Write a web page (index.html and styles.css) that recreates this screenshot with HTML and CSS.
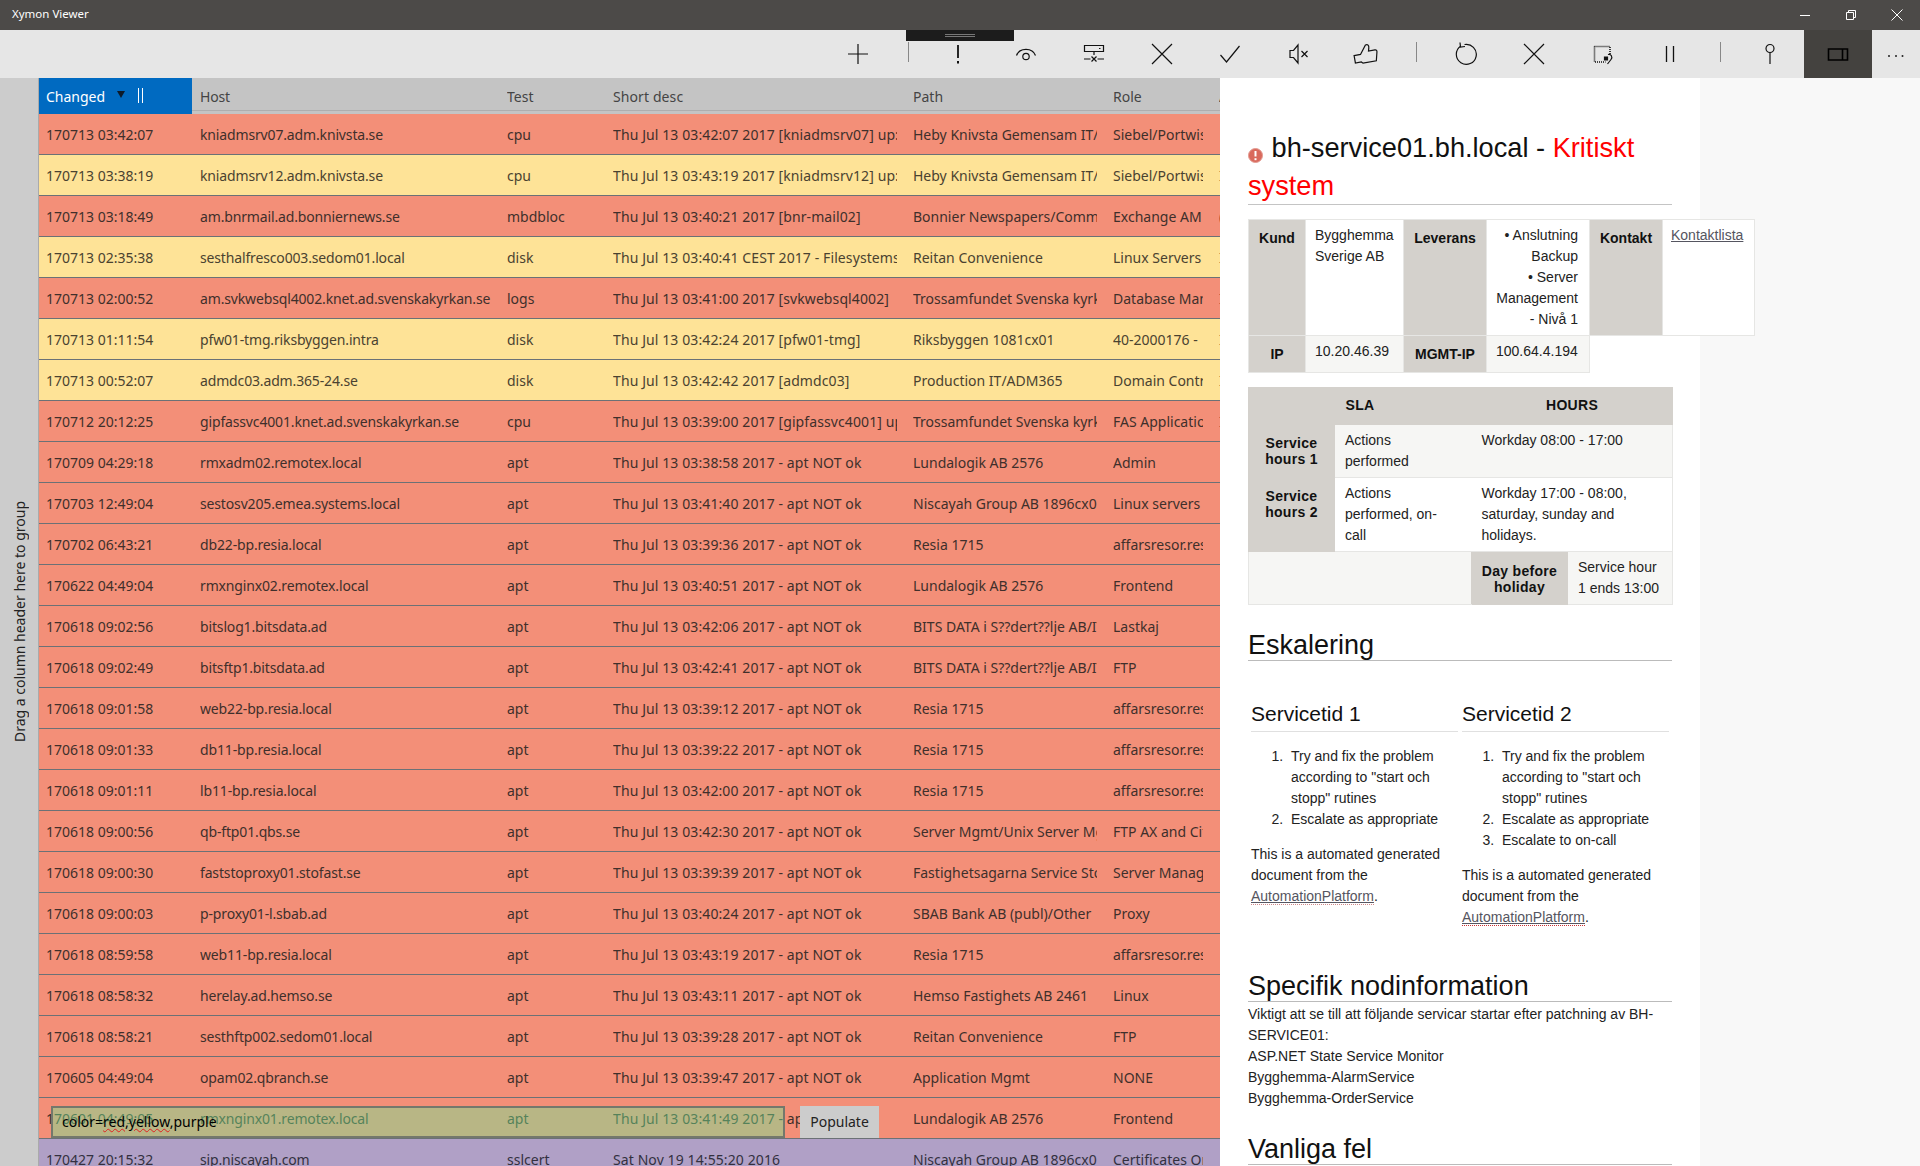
FILE: index.html
```html
<!DOCTYPE html>
<html lang="en">
<head>
  <meta charset="UTF-8">
  <title>Xymon Viewer</title>
  <link rel="stylesheet" href="styles.css">
</head>
<body>
  <header class="titlebar">
    <span class="app-name">Xymon Viewer</span>
    <div class="win-controls">
      <button class="win-btn"><svg width="12" height="12" viewBox="0 0 12 12"><path d="M1 6.5h10" stroke="#fff"/></svg></button>
      <button class="win-btn"><svg width="12" height="12" viewBox="0 0 12 12" fill="none" stroke="#fff"><path d="M1.5 3.5h7v7h-7z"/><path d="M3.5 3.5v-2h7v7h-2"/></svg></button>
      <button class="win-btn"><svg width="12" height="12" viewBox="0 0 12 12"><path d="M.5.5l11 11M11.5.5l-11 11" stroke="#fff"/></svg></button>
    </div>
  </header>

  <div class="toolbar">
    <div class="grip"><span></span></div>
    <button class="tool"><svg width="24" height="24" viewBox="0 0 24 24" class="ico"><path d="M2 12h20M12 2v20"/></svg></button>
    <span class="tool-sep"></span>
    <button class="tool"><svg width="24" height="24" viewBox="0 0 24 24" class="ico"><path d="M12 3v13" stroke-width="1.8"/><path d="M12 19v2.5" stroke-width="2"/></svg></button>
    <button class="tool"><svg width="24" height="24" viewBox="0 0 24 24" class="ico"><path d="M2.5 13.5a10 9 0 0 1 19 0"/><circle cx="12" cy="14.5" r="3.2"/></svg></button>
    <button class="tool"><svg width="24" height="24" viewBox="0 0 24 24" class="ico"><path d="M2.5 3.5h19v6h-19z"/><path d="M17 6.5h1.5M12 9.5v3.5M2 17h6.5M15.5 17H22M9.5 14.5l5 5M14.5 14.5l-5 5"/></svg></button>
    <button class="tool"><svg width="24" height="24" viewBox="0 0 24 24" class="ico"><path d="M2 2l20 20M22 2L2 22"/></svg></button>
    <button class="tool"><svg width="24" height="24" viewBox="0 0 24 24" class="ico"><path d="M2.5 13l6 7L21.500 4"/></svg></button>
    <button class="tool"><svg width="24" height="24" viewBox="0 0 24 24" class="ico"><path d="M4 8.500h3.500L12 3v18l-4.500-5.500H4z"/><path d="M15.500 9l6 6M21.500 9l-6 6"/></svg></button>
    <button class="tool"><svg width="26" height="24" viewBox="0 0 26 24" class="ico"><g transform="rotate(-10 13 12)"><path d="M1 11.500h6.500L14 3c2.500-.5 3.500 1 2.800 3.500L16 9.500h6.500c1.500 0 2 1.200 1.600 2.500L22 20.500H8.500L7 19H1z"/></g></svg></button>
    <span class="tool-sep"></span>
    <button class="tool"><svg width="24" height="24" viewBox="0 0 24 24" class="ico"><path d="M6.500 4.200a10 10 0 1 0 4-1.700"/><path d="M6 0.500l.5 4.500 4.500-.5"/></svg></button>
    <button class="tool"><svg width="24" height="24" viewBox="0 0 24 24" class="ico"><path d="M2 2l20 20M22 2L2 22"/></svg></button>
    <button class="tool"><svg width="24" height="24" viewBox="0 0 24 24" class="ico"><path d="M4.500 4.500h15.500v8M4.500 4.500v15.500h11" stroke-dasharray="1 1" stroke-width="1.600"/><path d="M14.500 15h3v3h-3z" fill="#111"/><path d="M18 12.500c3-1 5 2.500 3 5l-3.500 4.500"/></svg></button>
    <button class="tool"><svg width="24" height="24" viewBox="0 0 24 24" class="ico"><path d="M8.500 4v16M15.500 4v16" stroke-width="1.300"/></svg></button>
    <span class="tool-sep"></span>
    <button class="tool"><svg width="24" height="24" viewBox="0 0 24 24" class="ico"><circle cx="12" cy="6.500" r="4"/><path d="M12 10.500V22"/></svg></button>
    <button class="tool active"><svg width="24" height="24" viewBox="0 0 24 24" class="ico ico-bold"><path d="M2.500 7h19v11h-19zM16.500 7v11"/></svg></button>
    <button class="tool more"><svg width="20" height="6" viewBox="0 0 20 6"><circle cx="3" cy="3" r="1" fill="#222"/><circle cx="10" cy="3" r="1" fill="#222"/><circle cx="16.500" cy="3" r="1" fill="#222"/></svg></button>
  </div>

  <div class="main">
    <aside class="group-bar"><span>Drag a column header here to group</span></aside>

    <section class="grid">
      <div class="row head">
        <span class="sorted">Changed <svg class="sort-arrow" width="8" height="7" viewBox="0 0 8 7"><path d="M0 0h8L4 7z" fill="#0d1b2a"/></svg><i class="resize"></i></span>
        <span>Host</span><span>Test</span><span>Short desc</span><span>Path</span><span>Role</span><span>A</span>
      </div>
      <div class="row red"><span>170713 03:42:07</span><span>kniadmsrv07.adm.knivsta.se</span><span>cpu</span><span>Thu Jul 13 03:42:07 2017 [kniadmsrv07] up: 10:00</span><span>Heby Knivsta Gemensam IT/Drift</span><span>Siebel/Portwise</span><span></span></div>
      <div class="row yellow"><span>170713 03:38:19</span><span>kniadmsrv12.adm.knivsta.se</span><span>cpu</span><span>Thu Jul 13 03:43:19 2017 [kniadmsrv12] up: 10:00</span><span>Heby Knivsta Gemensam IT/Drift</span><span>Siebel/Portwise</span><span>I</span></div>
      <div class="row red"><span>170713 03:18:49</span><span>am.bnrmail.ad.bonniernews.se</span><span>mbdbloc</span><span>Thu Jul 13 03:40:21 2017 [bnr-mail02]</span><span>Bonnier Newspapers/Communication</span><span>Exchange AM</span><span>(</span></div>
      <div class="row yellow"><span>170713 02:35:38</span><span>sesthalfresco003.sedom01.local</span><span>disk</span><span>Thu Jul 13 03:40:41 CEST 2017 - Filesystems</span><span>Reitan Convenience</span><span>Linux Servers</span><span>I</span></div>
      <div class="row red"><span>170713 02:00:52</span><span>am.svkwebsql4002.knet.ad.svenskakyrkan.se</span><span>logs</span><span>Thu Jul 13 03:41:00 2017 [svkwebsql4002]</span><span>Trossamfundet Svenska kyrkan</span><span>Database Management</span><span>I</span></div>
      <div class="row yellow"><span>170713 01:11:54</span><span>pfw01-tmg.riksbyggen.intra</span><span>disk</span><span>Thu Jul 13 03:42:24 2017 [pfw01-tmg]</span><span>Riksbyggen 1081cx01</span><span>40-2000176 - </span><span>I</span></div>
      <div class="row yellow"><span>170713 00:52:07</span><span>admdc03.adm.365-24.se</span><span>disk</span><span>Thu Jul 13 03:42:42 2017 [admdc03]</span><span>Production IT/ADM365</span><span>Domain Controller</span><span>I</span></div>
      <div class="row red"><span>170712 20:12:25</span><span>gipfassvc4001.knet.ad.svenskakyrkan.se</span><span>cpu</span><span>Thu Jul 13 03:39:00 2017 [gipfassvc4001] up: 10:00</span><span>Trossamfundet Svenska kyrkan</span><span>FAS Application</span><span>I</span></div>
      <div class="row red"><span>170709 04:29:18</span><span>rmxadm02.remotex.local</span><span>apt</span><span>Thu Jul 13 03:38:58 2017 - apt NOT ok</span><span>Lundalogik AB 2576</span><span>Admin</span><span></span></div>
      <div class="row red"><span>170703 12:49:04</span><span>sestosv205.emea.systems.local</span><span>apt</span><span>Thu Jul 13 03:41:40 2017 - apt NOT ok</span><span>Niscayah Group AB 1896cx01</span><span>Linux servers</span><span></span></div>
      <div class="row red"><span>170702 06:43:21</span><span>db22-bp.resia.local</span><span>apt</span><span>Thu Jul 13 03:39:36 2017 - apt NOT ok</span><span>Resia 1715</span><span>affarsresor.resia.se</span><span></span></div>
      <div class="row red"><span>170622 04:49:04</span><span>rmxnginx02.remotex.local</span><span>apt</span><span>Thu Jul 13 03:40:51 2017 - apt NOT ok</span><span>Lundalogik AB 2576</span><span>Frontend</span><span></span></div>
      <div class="row red"><span>170618 09:02:56</span><span>bitslog1.bitsdata.ad</span><span>apt</span><span>Thu Jul 13 03:42:06 2017 - apt NOT ok</span><span>BITS DATA i S??dert??lje AB/IT</span><span>Lastkaj</span><span></span></div>
      <div class="row red"><span>170618 09:02:49</span><span>bitsftp1.bitsdata.ad</span><span>apt</span><span>Thu Jul 13 03:42:41 2017 - apt NOT ok</span><span>BITS DATA i S??dert??lje AB/IT</span><span>FTP</span><span></span></div>
      <div class="row red"><span>170618 09:01:58</span><span>web22-bp.resia.local</span><span>apt</span><span>Thu Jul 13 03:39:12 2017 - apt NOT ok</span><span>Resia 1715</span><span>affarsresor.resia.se</span><span></span></div>
      <div class="row red"><span>170618 09:01:33</span><span>db11-bp.resia.local</span><span>apt</span><span>Thu Jul 13 03:39:22 2017 - apt NOT ok</span><span>Resia 1715</span><span>affarsresor.resia.se</span><span></span></div>
      <div class="row red"><span>170618 09:01:11</span><span>lb11-bp.resia.local</span><span>apt</span><span>Thu Jul 13 03:42:00 2017 - apt NOT ok</span><span>Resia 1715</span><span>affarsresor.resia.se</span><span></span></div>
      <div class="row red"><span>170618 09:00:56</span><span>qb-ftp01.qbs.se</span><span>apt</span><span>Thu Jul 13 03:42:30 2017 - apt NOT ok</span><span>Server Mgmt/Unix Server Mgmt</span><span>FTP AX and Citrix</span><span></span></div>
      <div class="row red"><span>170618 09:00:30</span><span>faststoproxy01.stofast.se</span><span>apt</span><span>Thu Jul 13 03:39:39 2017 - apt NOT ok</span><span>Fastighetsagarna Service Stockholm</span><span>Server Management</span><span></span></div>
      <div class="row red"><span>170618 09:00:03</span><span>p-proxy01-l.sbab.ad</span><span>apt</span><span>Thu Jul 13 03:40:24 2017 - apt NOT ok</span><span>SBAB Bank AB (publ)/Other</span><span>Proxy</span><span></span></div>
      <div class="row red"><span>170618 08:59:58</span><span>web11-bp.resia.local</span><span>apt</span><span>Thu Jul 13 03:43:19 2017 - apt NOT ok</span><span>Resia 1715</span><span>affarsresor.resia.se</span><span></span></div>
      <div class="row red"><span>170618 08:58:32</span><span>herelay.ad.hemso.se</span><span>apt</span><span>Thu Jul 13 03:43:11 2017 - apt NOT ok</span><span>Hemso Fastighets AB 2461</span><span>Linux</span><span></span></div>
      <div class="row red"><span>170618 08:58:21</span><span>sesthftp002.sedom01.local</span><span>apt</span><span>Thu Jul 13 03:39:28 2017 - apt NOT ok</span><span>Reitan Convenience</span><span>FTP</span><span></span></div>
      <div class="row red"><span>170605 04:49:04</span><span>opam02.qbranch.se</span><span>apt</span><span>Thu Jul 13 03:39:47 2017 - apt NOT ok</span><span>Application Mgmt</span><span>NONE</span><span></span></div>
      <div class="row red"><span>170601 04:49:05</span><span>rmxnginx01.remotex.local</span><span>apt</span><span>Thu Jul 13 03:41:49 2017 - apt NOT ok</span><span>Lundalogik AB 2576</span><span>Frontend</span><span></span></div>
      <div class="row purple"><span>170427 20:15:32</span><span>sip.niscayah.com</span><span>sslcert</span><span>Sat Nov 19 14:55:20 2016</span><span>Niscayah Group AB 1896cx01</span><span>Certificates Only</span><span></span></div>

      <div class="filter-box">color=<span class="misspelled">red,yellow</span>,purple</div>
      <button class="populate">Populate</button>
    </section>

    <article class="doc">
      <h1 class="doc-title">
        <svg class="alert-icon" width="15" height="15" viewBox="0 0 15 15"><circle cx="7.500" cy="7.500" r="7" fill="#d9695c" stroke="#e39a90"/><path d="M7.500 3v5.500" stroke="#fff" stroke-width="2"/><path d="M7.500 10.200v2" stroke="#fff" stroke-width="2"/></svg>
        bh-service01.bh.local - <span class="critical">Kritiskt system</span>
      </h1>

      <table class="info-table">
        <colgroup><col class="c-kund"><col class="c-kund-val"><col class="c-lev"><col class="c-lev-val"><col class="c-kon"><col class="c-kon-val"></colgroup>
        <tr>
          <th>Kund</th>
          <td class="plain">Bygghemma Sverige AB</td>
          <th>Leverans</th>
          <td class="plain right">• Anslutning Backup<br>• Server Management<br>- Nivå 1</td>
          <th>Kontakt</th>
          <td class="plain"><a href="#" class="doc-link">Kontaktlista</a></td>
        </tr>
        <tr>
          <th>IP</th>
          <td>10.20.46.39</td>
          <th>MGMT-IP</th>
          <td>100.64.4.194</td>
        </tr>
      </table>

      <table class="sla-table">
        <colgroup><col class="s1"><col class="s2"><col class="s3"><col class="s4"></colgroup>
        <tr>
          <th colspan="2" class="sla-head">SLA</th>
          <th colspan="2" class="sla-head">HOURS</th>
        </tr>
        <tr class="alt">
          <th class="tight">Service hours 1</th>
          <td>Actions performed</td>
          <td colspan="2">Workday 08:00 - 17:00</td>
        </tr>
        <tr>
          <th class="tight">Service hours 2</th>
          <td>Actions performed, on-call</td>
          <td colspan="2">Workday 17:00 - 08:00, saturday, sunday and holidays.</td>
        </tr>
        <tr class="alt">
          <td colspan="2"></td>
          <th class="tight mid">Day before holiday</th>
          <td>Service hour 1 ends 13:00</td>
        </tr>
      </table>

      <h2 class="section first">Eskalering</h2>
      <div class="service-cols">
        <div class="service-col">
          <h3>Servicetid 1</h3>
          <ol>
            <li>Try and fix the problem according to "start och stopp" rutines</li>
            <li>Escalate as appropriate</li>
          </ol>
          <p>This is a automated generated document from the <a href="#" class="doc-link dotted">AutomationPlatform</a>.</p>
        </div>
        <div class="service-col">
          <h3>Servicetid 2</h3>
          <ol>
            <li>Try and fix the problem according to "start och stopp" rutines</li>
            <li>Escalate as appropriate</li>
            <li>Escalate to on-call</li>
          </ol>
          <p>This is a automated generated document from the <a href="#" class="doc-link dotted red-dots">AutomationPlatform</a>.</p>
        </div>
      </div>

      <h2 class="section nodinfo">Specifik nodinformation</h2>
      <p class="node-text">Viktigt att se till att följande servicar startar efter patchning av BH-SERVICE01:<br>ASP.NET State Service Monitor<br>Bygghemma-AlarmService<br>Bygghemma-OrderService</p>

      <h2 class="section errors">Vanliga fel</h2>
    </article>
  </div>
</body>
</html>
```

FILE: styles.css
```css
* { box-sizing: border-box; }
html, body { height: 100%; }
body { margin: 0; height: 1166px; overflow: hidden; display: flex; flex-direction: column; font-family: "Noto Sans", "Open Sans", sans-serif; background: #f8f8f8; }
button { font: inherit; border: none; background: none; padding: 0; }

/* title bar */
.titlebar { height: 30px; flex: none; background: #4c4a48; color: #fff; display: flex; align-items: center; justify-content: space-between; }
.app-name { font-size: 11.5px; padding: 0 0 3px 12px; }
.win-controls { display: flex; }
.win-btn { width: 46px; height: 30px; display: flex; align-items: center; justify-content: center; }

/* command bar */
.toolbar { height: 48px; flex: none; background: #e6e6e6; display: flex; justify-content: flex-end; position: relative; }
.tool { width: 68px; height: 48px; display: flex; align-items: center; justify-content: center; }
.tool.active { background: #44423f; }
.tool.more { width: 48px; padding-top: 4px; }
.tool-sep { width: 32px; display: flex; justify-content: center; padding: 12px 0 16px; }
.tool-sep::before { content: ""; width: 1px; background: #888; }
.ico { fill: none; stroke: #111; stroke-width: 1.2; }
.ico-bold { stroke: #000; stroke-width: 1.6; }
.grip { position: absolute; left: 906px; top: 0; width: 108px; height: 11px; background: #1c1c1c; display: flex; justify-content: center; padding-top: 4px; }
.grip span { width: 30px; height: 3px; border-top: 1px solid #777; border-bottom: 1px solid #777; }

/* main area */
.main { flex: 1; display: flex; min-height: 0; overflow: hidden; }
.group-bar { width: 39px; flex: none; background: #ccc; border-right: 1px solid #aaa; display: flex; align-items: center; justify-content: center; }
.group-bar span { writing-mode: vertical-rl; transform: rotate(180deg); font-size: 14px; color: #222; white-space: nowrap; }

/* data grid */
.grid { width: 1181px; flex: none; position: relative; overflow: hidden; font-size: 14px; }
.row { display: grid; grid-template-columns: 153px 307px 106px 300px 200px 106px 9px; height: 41px; align-items: center; border-bottom: 1px solid #6b7176; color: #402f2b; }
.row > span { margin: 0 8px; min-width: 0; white-space: nowrap; overflow: hidden; }
.row > span:first-child { margin-left: 7px; }
.row > span:nth-child(2) { letter-spacing: -0.15px; }
.row > span:nth-child(4) { letter-spacing: 0.1px; }
.row > span:last-child { margin-right: 0; }
.red { background: #f38f78; }
.yellow { background: #fee397; color: #4a4230; }
.purple { background: #b0a0c6; color: #33303f; }
.head { height: 36px; background: #c4c4c4; border-bottom: none; color: #444; box-shadow: inset 0 -3px 0 #c4c4c4, inset 0 -4px 0 #aeaeae; align-items: start; }
.head > span { line-height: 38px; height: 36px; }
.row > span.sorted { background: #006ac1; color: #fff; margin: 0; padding-left: 7px; position: relative; }
.sort-arrow { position: absolute; left: 78px; top: 13px; }
.resize { position: absolute; left: 99px; top: 10px; width: 5px; height: 15px; border-left: 1px solid #fff; border-right: 1px solid #fff; }

/* overlays on the grid */
.filter-box { position: absolute; left: 12px; top: 1028px; width: 734px; height: 32px; background: rgba(113, 231, 149, 0.45); border: 2px solid #74786c; color: #000; font-size: 14px; line-height: 28px; padding-left: 9px; }
.misspelled { text-decoration: underline wavy #e02020; text-decoration-thickness: 1px; }
.populate { position: absolute; left: 761px; top: 1028px; width: 79px; height: 32px; background: #ccc; color: #222; padding-bottom: 1px; }

/* wiki page on the right */
.doc { width: 480px; flex: none; background: #fff; padding: 51px 28px 0; font-family: "Liberation Sans", Arial, sans-serif; font-size: 14px; line-height: 21px; color: #222; }
.doc-title { margin: 0 0 14px; height: 76px; font-size: 27.2px; line-height: 38px; font-weight: normal; color: #111; border-bottom: 1px solid #c4c4c4; }
.alert-icon { vertical-align: -6px; margin-right: 1px; }
.critical { color: #f00; }
.doc-link { color: #555560; }
.dotted { text-decoration: underline; border-bottom: 1px dotted #d08a8a; }
.red-dots { border-bottom-color: #c33; }

table { border-collapse: collapse; table-layout: fixed; }
th { background: #d4d1cc; font-weight: bold; color: #111; }
th, td { border: 1px solid #e6e6e4; }
.info-table { width: 506px; margin-bottom: 14px; }
.info-table th { vertical-align: top; padding: 8px 4px 7px; text-align: center; }
.info-table td { vertical-align: top; padding: 5px 10px 5px 9px; background: #f6f6f4; }
.info-table td.plain { background: #fff; }
.info-table td.right { text-align: right; padding-right: 11px; }
.info-table td.plain:last-child { padding-left: 8px; }
.c-kund { width: 57px; }
.c-kund-val { width: 98px; }
.c-lev { width: 83px; }
.c-lev-val { width: 103px; }
.c-kon { width: 73px; }
.c-kon-val { width: 92px; }

.sla-table { width: 424px; border: 1px solid #e6e6e4; }
.s1 { width: 86px; }
.s2 { width: 137px; }
.s3 { width: 96px; }
.s4 { width: 105px; }
.sla-table th { border-color: #d4d1cc; }
.sla-table td { vertical-align: top; padding: 5px 10px; background: #fff; border-left: none; border-right: none; }
.sla-table td:nth-child(2):not(:last-child) { padding-right: 20px; }
.sla-table .alt td { background: #f6f6f4; }
.sla-head { height: 37px; padding: 0 0 2px; text-align: center; letter-spacing: 0.3px; }
.tight { line-height: 16px; padding: 10px 6px 0; vertical-align: top; text-align: center; letter-spacing: 0.3px; }
.tight.mid { padding-top: 11px; }

.section { margin: 0; font-size: 27px; line-height: 30px; font-weight: normal; color: #111; border-bottom: 1px solid #bbb; }
.section.first { margin-top: 25px; }
.section.nodinfo { margin-top: 43px; }
.section.errors { margin-top: 25px; }
.service-cols { display: flex; gap: 4px; padding: 0 3px; margin-top: 41px; }
.service-col { width: 207px; }
.service-col h3 { margin: 0; font-size: 21px; line-height: 24px; font-weight: normal; color: #111; padding-bottom: 5px; border-bottom: 1px solid #e0e0e0; }
.service-col ol { margin: 14px 0; padding-left: 36px; }
.service-col li { padding-left: 4px; }
.service-col p { margin: 0; }
.node-text { margin: 2px 0 0; }
```
